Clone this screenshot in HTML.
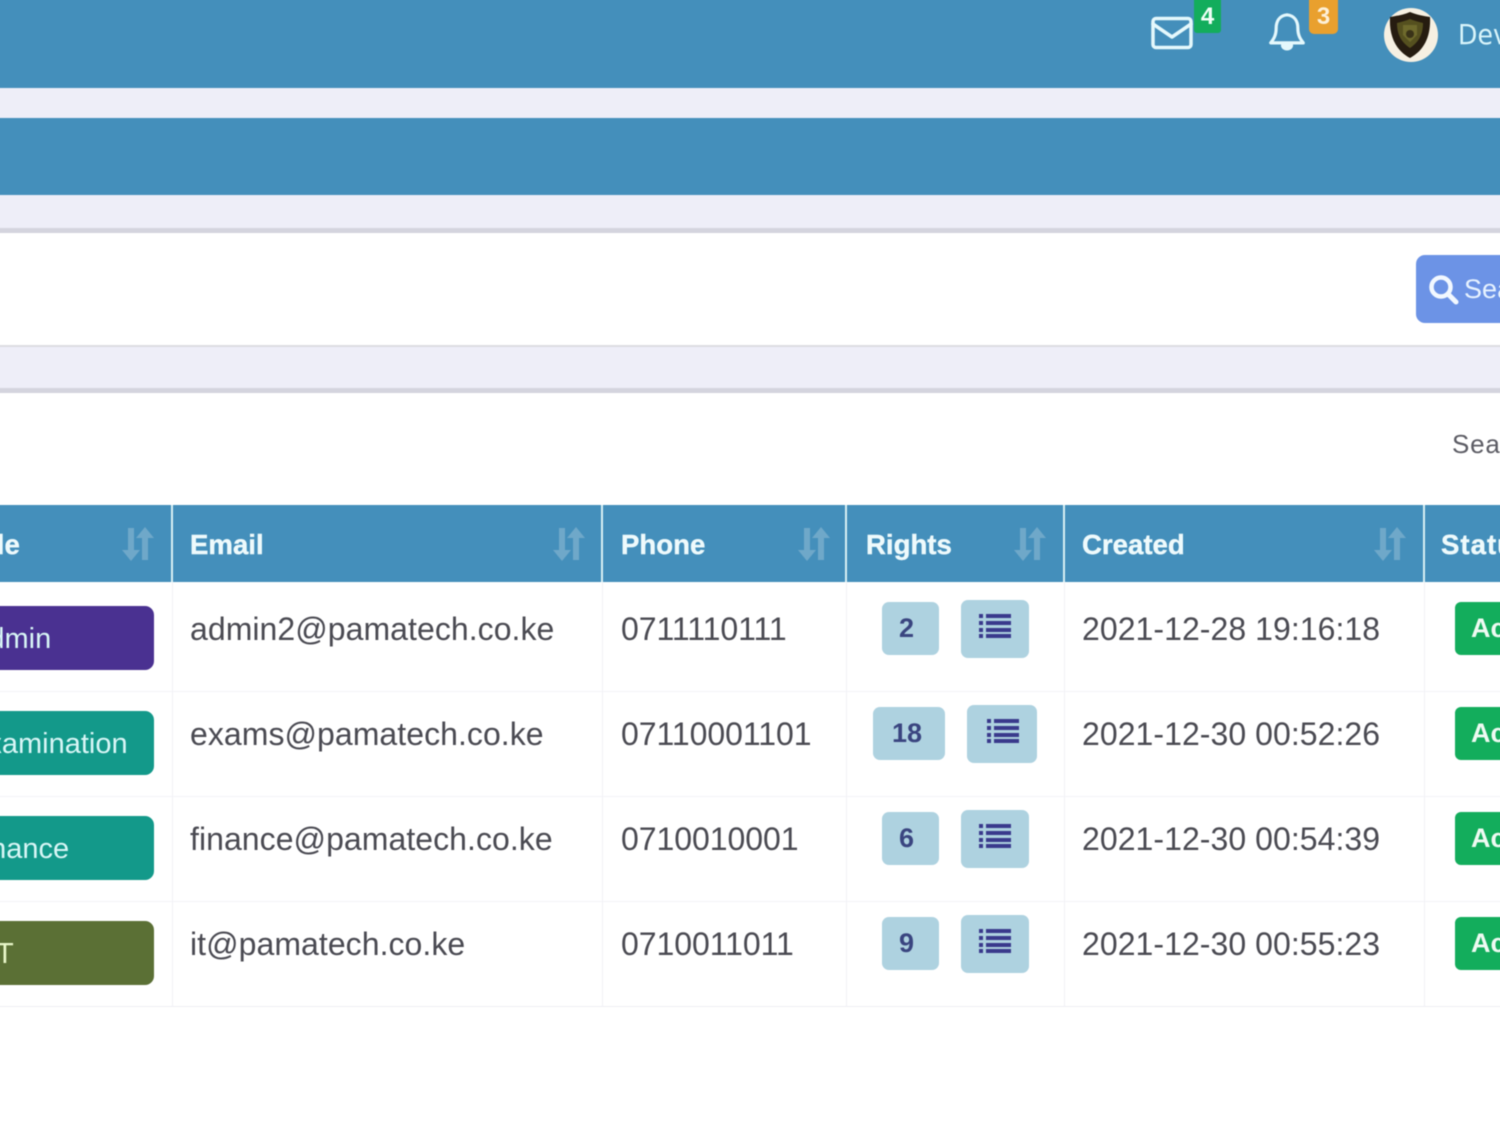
<!DOCTYPE html>
<html lang="en">
<head>
<meta charset="utf-8">
<title>Users</title>
<style>
html,body{margin:0;padding:0;background:#fff}
#o{position:relative;width:1500px;height:1126px;overflow:hidden;background:#fff}
#p{position:absolute;left:0;top:0;width:1500px;height:1126px;font-family:"Liberation Sans",sans-serif;filter:blur(.6px)}
#p div,#p svg{position:absolute}
.t{white-space:nowrap;font-size:32px;line-height:36px;color:#4a4a52;letter-spacing:.05px}
.h{white-space:nowrap;font-size:27.6px;line-height:32px;font-weight:bold;color:#eefafc;top:529px;-webkit-text-stroke:.4px #eefafc}
.v{background:#f1f1f6;width:1px;top:582px;height:425px}
.hv{background:#d8f0f4;width:2px;top:505px;height:77px}
.r{background:#f3f3f7;height:1px;left:-10px;width:1520px}
.role{left:-20px;width:174px;height:64px;border-radius:9px;color:#d8f6f6;font-size:29px;line-height:66px;white-space:nowrap}
.n{background:#aed2e0;border-radius:7px;height:53px;color:#3a4580;font-weight:bold;font-size:27px;line-height:53px;text-align:center;box-sizing:border-box;padding-right:8px}
.l{background:#aed2e0;border-radius:7px;height:58px}
.g{background:#13ad5c;border-radius:6px;left:1455px;width:60px;height:53px;color:#eefaf2;font-weight:bold;font-size:27px;line-height:53px;padding-left:16px;white-space:nowrap}
</style>
</head>
<body>
<div id="o">
<div id="p">
<div style="left:-10px;top:-10px;width:1520px;height:98px;background:#448fbb"></div>
<div style="left:-10px;top:88px;width:1520px;height:30px;background:#eeeef8"></div>
<div style="left:-10px;top:118px;width:1520px;height:77px;background:#448fbb"></div>
<div style="left:-10px;top:195px;width:1520px;height:33px;background:#eeeef8"></div>
<div style="left:-10px;top:228px;width:1520px;height:5px;background:#d4d4de"></div>
<div style="left:-10px;top:345px;width:1520px;height:2px;background:#dcdce2"></div>
<div style="left:-10px;top:347px;width:1520px;height:41px;background:#eeeef8"></div>
<div style="left:-10px;top:388px;width:1520px;height:5px;background:#d4d4de"></div>

<svg style="left:1150px;top:15px" width="44" height="36" viewBox="0 0 44 36" fill="none" stroke="#e4f8fc" stroke-width="3.500" stroke-linejoin="round" stroke-linecap="round"><rect x="3" y="3.500" width="38" height="29" rx="3"/><path d="M3 9 L22 22 L41 9"/></svg>
<div style="left:1194px;top:-10px;width:27px;height:43px;background:#13ad5c;border-radius:0 0 3px 3px;color:#f0fff6;font-weight:bold;font-size:24px;line-height:53px;text-align:center">4</div>
<svg style="left:1268px;top:11px" width="38" height="42" viewBox="0 0 42 44" fill="none" stroke="#e4f8fc" stroke-width="3.500" stroke-linejoin="round" stroke-linecap="round"><path d="M21 3 C12 4 9 11 9 18 C9 26 6 30 3 34 L39 34 C36 30 33 26 33 18 C33 11 30 4 21 3 Z"/><path d="M16 37 C17 42 25 42 26 37 Z" fill="#e4f8fc"/></svg>
<div style="left:1309px;top:-10px;width:29px;height:44px;background:#e9a02e;border-radius:0 0 5px 5px;color:#fdf0d8;font-weight:bold;font-size:24px;line-height:54px;text-align:center">3</div>
<div style="left:1384px;top:8px;width:54px;height:54px;border-radius:50%;background:#f6f0e2"></div>
<svg style="left:1388px;top:11px" width="44" height="48" viewBox="0 0 44 48"><path d="M22 1 C29 4 36 5 42 6 C43 24 37 39 22 47 C7 39 1 24 2 6 C8 5 15 4 22 1 Z" fill="#261c10"/><path d="M22 8 C27 10 31 11 35 12 C35 23 31 31 22 37 C13 31 9 23 9 12 C13 11 17 10 22 8 Z" fill="#55501f"/><path d="M15 14h14v10l-7 7-7-7z" fill="#6e6a2c"/><circle cx="22" cy="23" r="4" fill="#3a3318"/></svg>
<div class="t" style="left:1458px;top:17px;font-size:28px;color:#d8f4fa;font-family:'DejaVu Sans',sans-serif;transform-origin:left;transform:scaleX(.9)">Dev</div>

<div style="left:1416px;top:255px;width:110px;height:68px;border-radius:9px;background:#6c93e6"></div>
<svg style="left:1428px;top:274px" width="32" height="32" viewBox="0 0 32 32" fill="none" stroke="#f2f8ff" stroke-linecap="round"><circle cx="13" cy="13" r="9.500" stroke-width="4.500"/><path d="M20 20 L28 28" stroke-width="5"/></svg>
<div class="t" style="left:1464px;top:271px;font-size:27px;color:#e6f2ff">Search</div>

<div class="t" style="left:1452px;top:426px;font-size:26px;letter-spacing:.8px;color:#5c5c64">Search</div>

<div style="left:-10px;top:505px;width:1520px;height:77px;background:#448fbb"></div>
<div class="hv" style="left:171px"></div>
<div class="hv" style="left:601px"></div>
<div class="hv" style="left:845px"></div>
<div class="hv" style="left:1063px"></div>
<div class="hv" style="left:1423px"></div>

<div class="h" style="left:-40px">Role</div>
<div class="h" style="left:190px">Email</div>
<div class="h" style="left:621px">Phone</div>
<div class="h" style="left:866px">Rights</div>
<div class="h" style="left:1082px">Created</div>
<div class="h" style="left:1441px;letter-spacing:1px">Status</div>

<svg style="left:122px;top:526px" width="32" height="36" viewBox="0 0 32 36" fill="#6fa8c9"><path d="M6 2h6v22h6L9 35 0 24h6zM20 34V12h-6L23 1l9 11h-6v22z"/></svg>
<svg style="left:553px;top:526px" width="32" height="36" viewBox="0 0 32 36" fill="#6fa8c9"><path d="M6 2h6v22h6L9 35 0 24h6zM20 34V12h-6L23 1l9 11h-6v22z"/></svg>
<svg style="left:798px;top:526px" width="32" height="36" viewBox="0 0 32 36" fill="#6fa8c9"><path d="M6 2h6v22h6L9 35 0 24h6zM20 34V12h-6L23 1l9 11h-6v22z"/></svg>
<svg style="left:1014px;top:526px" width="32" height="36" viewBox="0 0 32 36" fill="#6fa8c9"><path d="M6 2h6v22h6L9 35 0 24h6zM20 34V12h-6L23 1l9 11h-6v22z"/></svg>
<svg style="left:1374px;top:526px" width="32" height="36" viewBox="0 0 32 36" fill="#6fa8c9"><path d="M6 2h6v22h6L9 35 0 24h6zM20 34V12h-6L23 1l9 11h-6v22z"/></svg>

<div class="v" style="left:172px"></div>
<div class="v" style="left:602px"></div>
<div class="v" style="left:846px"></div>
<div class="v" style="left:1064px"></div>
<div class="v" style="left:1424px"></div>
<div class="r" style="top:691px"></div>
<div class="r" style="top:796px"></div>
<div class="r" style="top:901px"></div>
<div class="r" style="top:1006px;background:#eeeef3"></div>

<div class="role" style="top:606px;background:#4a3191"><span style="position:absolute;left:-11px">Admin</span></div>
<div class="role" style="top:711px;background:#13998a"><span style="position:absolute;left:-12px">Examination</span></div>
<div class="role" style="top:816px;background:#13998a"><span style="position:absolute;left:-14px">Finance</span></div>
<div class="role" style="top:921px;background:#5b7035;color:#e8f6c8"><span style="position:absolute;left:8px">IT</span></div>

<div class="t" style="left:190px;top:611px">admin2@pamatech.co.ke</div>
<div class="t" style="left:190px;top:716px">exams@pamatech.co.ke</div>
<div class="t" style="left:190px;top:821px">finance@pamatech.co.ke</div>
<div class="t" style="left:190px;top:926px">it@pamatech.co.ke</div>

<div class="t" style="left:621px;top:611px;letter-spacing:-.05px">0711110111</div>
<div class="t" style="left:621px;top:716px;letter-spacing:-.05px">07110001101</div>
<div class="t" style="left:621px;top:821px;letter-spacing:-.05px">0710010001</div>
<div class="t" style="left:621px;top:926px;letter-spacing:-.05px">0710011011</div>

<div class="n" style="left:882px;top:602px;width:57px">2</div>
<div class="l" style="left:961px;top:600px;width:68px"></div>
<svg style="left:979px;top:612px" width="32" height="27" viewBox="0 0 32 27" fill="#3a3a8c"><path d="M0 2h4v4H0zM7 2h25v4H7zM0 9h4v4H0zM7 9h25v4H7zM0 16h4v4H0zM7 16h25v4H7zM0 22h4v4H0zM7 22h25v4H7z"/></svg>
<div class="n" style="left:873px;top:707px;width:72px;padding-right:4px">18</div>
<div class="l" style="left:967px;top:705px;width:70px"></div>
<svg style="left:987px;top:717px" width="32" height="27" viewBox="0 0 32 27" fill="#3a3a8c"><path d="M0 2h4v4H0zM7 2h25v4H7zM0 9h4v4H0zM7 9h25v4H7zM0 16h4v4H0zM7 16h25v4H7zM0 22h4v4H0zM7 22h25v4H7z"/></svg>
<div class="n" style="left:882px;top:812px;width:57px">6</div>
<div class="l" style="left:961px;top:810px;width:68px"></div>
<svg style="left:979px;top:822px" width="32" height="27" viewBox="0 0 32 27" fill="#3a3a8c"><path d="M0 2h4v4H0zM7 2h25v4H7zM0 9h4v4H0zM7 9h25v4H7zM0 16h4v4H0zM7 16h25v4H7zM0 22h4v4H0zM7 22h25v4H7z"/></svg>
<div class="n" style="left:882px;top:917px;width:57px">9</div>
<div class="l" style="left:961px;top:915px;width:68px"></div>
<svg style="left:979px;top:927px" width="32" height="27" viewBox="0 0 32 27" fill="#3a3a8c"><path d="M0 2h4v4H0zM7 2h25v4H7zM0 9h4v4H0zM7 9h25v4H7zM0 16h4v4H0zM7 16h25v4H7zM0 22h4v4H0zM7 22h25v4H7z"/></svg>

<div class="t" style="left:1082px;top:611px">2021-12-28 19:16:18</div>
<div class="t" style="left:1082px;top:716px">2021-12-30 00:52:26</div>
<div class="t" style="left:1082px;top:821px">2021-12-30 00:54:39</div>
<div class="t" style="left:1082px;top:926px">2021-12-30 00:55:23</div>

<div class="g" style="top:602px">Active</div>
<div class="g" style="top:707px">Active</div>
<div class="g" style="top:812px">Active</div>
<div class="g" style="top:917px">Active</div>
</div>
</div>
</body>
</html>
